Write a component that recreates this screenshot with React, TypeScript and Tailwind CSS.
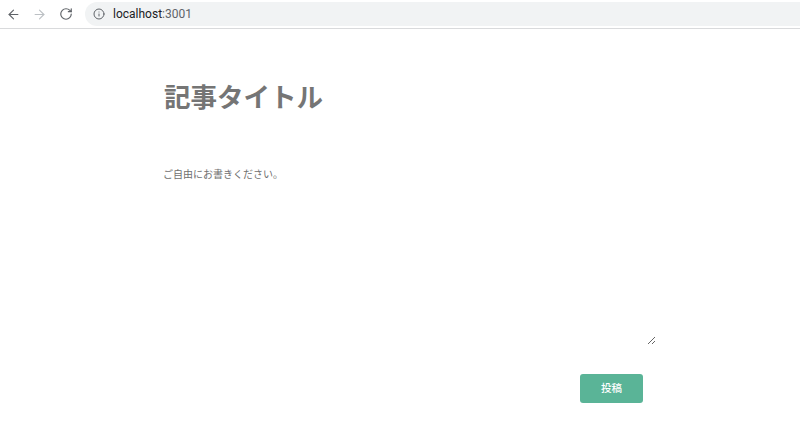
import { ArrowLeft, ArrowRight, RotateCw, Info } from "lucide-react";

const cjk = "font-['Inter','Noto_Sans_CJK_JP',sans-serif]";

export default function App() {
  return (
    <div className="w-[800px] h-[441px] bg-white overflow-hidden font-['Roboto','Noto_Sans_CJK_JP',sans-serif]">
      <header className="h-[29px] flex items-center border-b border-[#d9dadc]">
        <div className="flex items-center gap-[11px] pl-[6px]">
          <ArrowLeft className="w-[15px] h-[15px] text-[#5f6368]" strokeWidth={1.8} />
          <ArrowRight className="w-[15px] h-[15px] text-[#bcc0c4]" strokeWidth={1.8} />
          <RotateCw className="w-[14px] h-[14px] ml-px text-[#5f6368]" strokeWidth={2} />
        </div>
        <div className="ml-[12px] w-[716px] h-[24px] rounded-l-full bg-[#f1f3f4] flex items-center pl-[8px]">
          <Info className="w-[12px] h-[12px] text-[#5f6368]" strokeWidth={2} />
          <span className="ml-[8px] text-[12px] text-[#202124]">
            localhost<span className="text-[#5f6368]">:3001</span>
          </span>
        </div>
      </header>
      <main className={`w-[493px] ml-[163px] flex flex-col ${cjk}`}>
        <input
          defaultValue="記事タイトル"
          className="mt-[46px] h-[40px] w-full outline-none text-[26.5px] font-semibold text-[#757575] pl-px"
        />
        <textarea
          defaultValue="ご自由にお書きください。"
          className="mt-[52px] h-[178px] w-full outline-none text-[10px] leading-[14px] text-[#6f6f6f]"
        />
        <div className="mt-[29px] flex justify-end pr-[13px]">
          <button className="w-[63px] h-[29px] rounded-[3px] bg-[#5ab497] text-white text-[10.5px] font-medium">
            投稿
          </button>
        </div>
      </main>
    </div>
  );
}
